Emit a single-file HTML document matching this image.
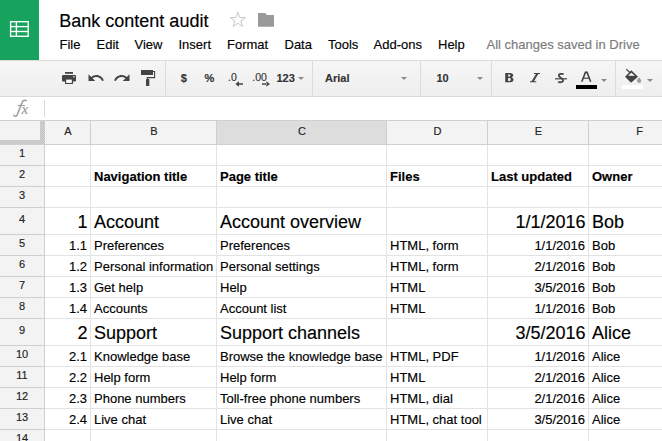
<!DOCTYPE html><html><head><meta charset="utf-8"><style>
*{margin:0;padding:0;box-sizing:border-box}
html,body{width:662px;height:441px;overflow:hidden;background:#fff;font-family:"Liberation Sans", sans-serif;position:relative}
.a{position:absolute;white-space:nowrap}
.t{position:absolute;white-space:nowrap;line-height:1;color:#000;-webkit-text-stroke:0.15px currentColor}
svg{position:absolute;overflow:visible}
</style></head><body>
<div class="a" style="left:0;top:0;width:39px;height:60px;background:#17a35e"></div>
<svg style="left:0;top:0" width="39" height="60" viewBox="0 0 39 60">
<g fill="none" stroke="#fff" stroke-width="1.35">
<rect x="10.6" y="21.7" width="17.6" height="14.6"/>
<line x1="10.6" y1="26.6" x2="28.2" y2="26.6"/>
<line x1="10.6" y1="31.5" x2="28.2" y2="31.5"/>
<line x1="16.4" y1="21.7" x2="16.4" y2="36.3"/>
</g></svg>
<div class="t" style="left:59.3px;top:12px;font-size:18px">Bank content audit</div>
<svg style="left:0;top:0" width="1" height="1"><polygon points="237.90,12.10 239.76,17.44 245.41,17.56 240.91,20.98 242.54,26.39 237.90,23.16 233.26,26.39 234.89,20.98 230.39,17.56 236.04,17.44" fill="none" stroke="#c8c8c8" stroke-width="1"/></svg>
<svg style="left:258px;top:12px" width="17" height="15" viewBox="0 0 17 15">
<path d="M0 1 L7 1 L9 3 L16 3 L16 14.7 L0 14.7 Z" fill="#9a9a9a"/>
</svg>
<div class="t" style="left:59.5px;top:37.6px;font-size:13px">File</div>
<div class="t" style="left:96.5px;top:37.6px;font-size:13px">Edit</div>
<div class="t" style="left:134.5px;top:37.6px;font-size:13px">View</div>
<div class="t" style="left:178.5px;top:37.6px;font-size:13px">Insert</div>
<div class="t" style="left:227.0px;top:37.6px;font-size:13px">Format</div>
<div class="t" style="left:284.5px;top:37.6px;font-size:13px">Data</div>
<div class="t" style="left:328.0px;top:37.6px;font-size:13px">Tools</div>
<div class="t" style="left:373.5px;top:37.6px;font-size:13px">Add-ons</div>
<div class="t" style="left:438.0px;top:37.6px;font-size:13px">Help</div>
<div class="t" style="left:486.5px;top:37.6px;font-size:13px;color:#7b7b7b">All changes saved in Drive</div>
<div class="a" style="left:0;top:60px;width:662px;height:37px;background:linear-gradient(#f6f6f6,#eeeeee);border-top:1px solid #dadada;border-bottom:1px solid #d9d9d9"></div>
<div class="a" style="left:165px;top:61px;width:1px;height:35px;background:#dcdcdc"></div>
<div class="a" style="left:312px;top:61px;width:1px;height:35px;background:#dcdcdc"></div>
<div class="a" style="left:420px;top:61px;width:1px;height:35px;background:#dcdcdc"></div>
<div class="a" style="left:491px;top:61px;width:1px;height:35px;background:#dcdcdc"></div>
<div class="a" style="left:615px;top:61px;width:1px;height:35px;background:#dcdcdc"></div>
<svg style="left:60px;top:70px" width="18" height="16" viewBox="0 0 18 16">
<rect x="5" y="2" width="8" height="1.8" fill="#444"/>
<rect x="2" y="5" width="14" height="6.5" rx="1" fill="#444"/>
<rect x="5" y="8.5" width="8" height="5.5" fill="#444"/>
<rect x="6.2" y="9.6" width="5.6" height="3.3" fill="#fff"/>
<circle cx="13.9" cy="6.8" r="0.8" fill="#fff"/>
</svg>
<svg style="left:86.5px;top:68.5px" width="18" height="18" viewBox="0 0 24 24">
<path d="M12.5 8c-2.65 0-5.05.99-6.9 2.6L2 7v9h9l-3.62-3.62c1.39-1.160 3.16-1.88 5.12-1.88 3.54 0 6.55 2.31 7.6 5.5l2.37-.78C21.08 11.03 17.15 8 12.5 8z" fill="#444"/>
</svg>
<svg style="left:112.5px;top:68.5px" width="18" height="18" viewBox="0 0 24 24">
<path d="M18.4 10.6C16.55 8.99 14.15 8 11.5 8c-4.65 0-8.58 3.03-9.96 7.22L3.9 16c1.05-3.19 4.05-5.5 7.6-5.5 1.95 0 3.73.72 5.12 1.88L13 16h9V7l-3.6 3.6z" fill="#444"/>
</svg>
<svg style="left:140px;top:69px" width="17" height="18" viewBox="0 0 17 18">
<rect x="1" y="1" width="12" height="5" fill="#444"/>
<path d="M13 2.5 H14.6 V8.6 H7.3 V10" fill="none" stroke="#444" stroke-width="1.1"/>
<rect x="6" y="10" width="3.3" height="7" rx="0.5" fill="#444"/>
</svg>
<div class="t" style="left:180.7px;top:73px;font-size:11px;font-weight:bold;color:#333">$</div>
<div class="t" style="left:204.5px;top:73px;font-size:11px;font-weight:bold;color:#333">%</div>
<div class="t" style="left:228px;top:72px;font-size:10.5px;color:#333">.0</div>
<svg style="left:0;top:0" width="1" height="1"><path d="M238 83.2H243V84.8H238Z M235.3 84 L239 81.3 L239 86.7Z" fill="#444"/></svg>
<div class="t" style="left:252.3px;top:72px;font-size:10.5px;color:#333">.00</div>
<svg style="left:0;top:0" width="1" height="1"><path d="M262 83.2H267V84.8H262Z M270 84 L266.3 81.3 L266.3 86.7Z" fill="#444"/></svg>
<div class="t" style="left:276.5px;top:73px;font-size:11px;font-weight:bold;color:#333">123</div>
<svg style="left:297.7px;top:77px" width="6" height="3" viewBox="0 0 6 3"><path d="M0 0H6L3 3Z" fill="#8a8a8a"/></svg>
<div class="t" style="left:325px;top:73px;font-size:11px;font-weight:bold;color:#333">Arial</div>
<svg style="left:400.5px;top:77px" width="6" height="3" viewBox="0 0 6 3"><path d="M0 0H6L3 3Z" fill="#8a8a8a"/></svg>
<div class="t" style="left:436.5px;top:73px;font-size:11px;font-weight:bold;color:#333">10</div>
<svg style="left:477px;top:77px" width="6" height="3" viewBox="0 0 6 3"><path d="M0 0H6L3 3Z" fill="#8a8a8a"/></svg>
<svg style="left:504.8px;top:72.8px" width="9" height="10" viewBox="0 0 9 10">
<path fill-rule="evenodd" fill="#444" d="M0.2 0 H5 C7.3 0 8.2 1.1 8.2 2.3 C8.2 3.4 7.5 4.1 6.5 4.4 C7.8 4.7 8.5 5.6 8.5 6.8 C8.5 8.3 7.3 9.3 5.2 9.3 H0.2 V0 Z M3.1 1.5 H4.3 C5.0 1.5 5.3 1.9 5.3 2.5 C5.3 3.1 5 3.6 4.3 3.6 H3.1 Z M3.1 5.1 H4.5 C5.3 5.1 5.7 5.7 5.7 6.5 C5.7 7.3 5.3 7.9 4.5 7.9 H3.1 Z"/>
</svg>
<svg style="left:529.9px;top:72.8px" width="10" height="10" viewBox="0 0 10 10">
<path fill="#444" d="M4 0 H10 V1.1 H4 Z M0 8.2 H6.3 V9.3 H0 Z M6.3 0.5 H8.6 L3.6 8.8 H1.3 Z"/>
</svg>
<svg style="left:555px;top:72.8px" width="12" height="10" viewBox="0 0 12 10">
<path d="M8.6 1.5 C7.8 0.6 3.8 0.2 3.8 2.6 C3.8 4.6 8.1 4.8 8.1 7.3 C8.1 9.6 4.2 9.6 3.3 8.7" fill="none" stroke="#444" stroke-width="1.8"/>
<rect x="0" y="5.2" width="12" height="1.2" fill="#444"/>
</svg>
<svg style="left:576px;top:70px" width="22" height="20" viewBox="0 0 22 20">
<path d="M5.8 11.8 L9.4 2.4 H11.1 L14.7 11.8" fill="none" stroke="#444" stroke-width="1.6" stroke-linejoin="miter"/>
<rect x="6.8" y="7.6" width="7" height="1.2" fill="#444"/>
<rect x="9" y="1.9" width="2.5" height="1.3" fill="#444"/>
</svg>
<div class="a" style="left:576px;top:85px;width:21px;height:4px;background:#000"></div>
<svg style="left:601px;top:79px" width="6" height="3" viewBox="0 0 6 3"><path d="M0 0H6L3 3Z" fill="#8a8a8a"/></svg>
<svg style="left:618px;top:64px" width="28" height="28" viewBox="0 0 28 28">
<path d="M8.3 5.1 L13.6 10.2" stroke="#444" stroke-width="1.2"/>
<path d="M7 12.7 L13.3 6.3 L20 12.7 L13 18.7 Z" fill="#444"/>
<path d="M10.2 11.75 L13.3 8.7 L16.9 11.75 Z" fill="#fff"/>
<path d="M21.1 13.3 C20 15 19 16 19 16.8 A2.1 2.1 0 0 0 23.2 16.8 C23.2 16 22.2 15 21.1 13.3Z" fill="#9a9a9a"/>
</svg>
<div class="a" style="left:622px;top:85px;width:21px;height:4px;background:#fff"></div>
<svg style="left:647px;top:79px" width="6" height="3" viewBox="0 0 6 3"><path d="M0 0H6L3 3Z" fill="#8a8a8a"/></svg>
<svg style="left:0;top:0" width="1" height="1"><path d="M13.6 114.6 C14.3 116.9 16.2 117.0 17.3 114.6 L21.9 102.8 C22.7 100.6 24.6 99.7 26.8 100.8" fill="none" stroke="#9c9c9c" stroke-width="1.5"/><path d="M17.6 105.5 H24.8" stroke="#9c9c9c" stroke-width="1.1"/></svg>
<div class="t" style="left:21.6px;top:101.8px;font-size:15px;font-style:italic;color:#9a9a9a;font-family:'Liberation Serif',serif">x</div>
<div class="a" style="left:44px;top:100px;width:1px;height:17px;background:#d9d9d9"></div>
<div class="a" style="left:0;top:120px;width:662px;height:25px;background:#f3f3f3"></div>
<div class="a" style="left:217px;top:121px;width:169px;height:23px;background:#dddddd"></div>
<div class="a" style="left:0;top:144px;width:44px;height:300px;background:#f3f3f3"></div>
<div class="a" style="left:0;top:120px;width:662px;height:1px;background:#d0d0d0"></div>
<div class="a" style="left:0;top:144px;width:662px;height:1px;background:#cfcfcf"></div>
<div class="a" style="left:0;top:165px;width:662px;height:1px;background:#e2e3e3"></div>
<div class="a" style="left:0;top:186px;width:662px;height:1px;background:#e2e3e3"></div>
<div class="a" style="left:0;top:207px;width:662px;height:1px;background:#e2e3e3"></div>
<div class="a" style="left:0;top:234px;width:662px;height:1px;background:#e2e3e3"></div>
<div class="a" style="left:0;top:255px;width:662px;height:1px;background:#e2e3e3"></div>
<div class="a" style="left:0;top:276px;width:662px;height:1px;background:#e2e3e3"></div>
<div class="a" style="left:0;top:297px;width:662px;height:1px;background:#e2e3e3"></div>
<div class="a" style="left:0;top:318px;width:662px;height:1px;background:#e2e3e3"></div>
<div class="a" style="left:0;top:345px;width:662px;height:1px;background:#e2e3e3"></div>
<div class="a" style="left:0;top:366px;width:662px;height:1px;background:#e2e3e3"></div>
<div class="a" style="left:0;top:387px;width:662px;height:1px;background:#e2e3e3"></div>
<div class="a" style="left:0;top:408px;width:662px;height:1px;background:#e2e3e3"></div>
<div class="a" style="left:0;top:429px;width:662px;height:1px;background:#e2e3e3"></div>
<div class="a" style="left:0;top:450px;width:662px;height:1px;background:#e2e3e3"></div>
<div class="a" style="left:44px;top:120px;width:1px;height:330px;background:#cfcfcf"></div>
<div class="a" style="left:90px;top:120px;width:1px;height:330px;background:#e2e3e3"></div>
<div class="a" style="left:216px;top:120px;width:1px;height:330px;background:#e2e3e3"></div>
<div class="a" style="left:386px;top:120px;width:1px;height:330px;background:#e2e3e3"></div>
<div class="a" style="left:487px;top:120px;width:1px;height:330px;background:#e2e3e3"></div>
<div class="a" style="left:588px;top:120px;width:1px;height:330px;background:#e2e3e3"></div>
<div class="a" style="left:689px;top:120px;width:1px;height:330px;background:#e2e3e3"></div>
<div class="a" style="left:90px;top:120px;width:1px;height:25px;background:#cfcfcf"></div>
<div class="a" style="left:216px;top:120px;width:1px;height:25px;background:#cfcfcf"></div>
<div class="a" style="left:386px;top:120px;width:1px;height:25px;background:#cfcfcf"></div>
<div class="a" style="left:487px;top:120px;width:1px;height:25px;background:#cfcfcf"></div>
<div class="a" style="left:588px;top:120px;width:1px;height:25px;background:#cfcfcf"></div>
<div class="a" style="left:689px;top:120px;width:1px;height:25px;background:#cfcfcf"></div>
<div class="a" style="left:0;top:165px;width:45px;height:1px;background:#cfcfcf"></div>
<div class="a" style="left:0;top:186px;width:45px;height:1px;background:#cfcfcf"></div>
<div class="a" style="left:0;top:207px;width:45px;height:1px;background:#cfcfcf"></div>
<div class="a" style="left:0;top:234px;width:45px;height:1px;background:#cfcfcf"></div>
<div class="a" style="left:0;top:255px;width:45px;height:1px;background:#cfcfcf"></div>
<div class="a" style="left:0;top:276px;width:45px;height:1px;background:#cfcfcf"></div>
<div class="a" style="left:0;top:297px;width:45px;height:1px;background:#cfcfcf"></div>
<div class="a" style="left:0;top:318px;width:45px;height:1px;background:#cfcfcf"></div>
<div class="a" style="left:0;top:345px;width:45px;height:1px;background:#cfcfcf"></div>
<div class="a" style="left:0;top:366px;width:45px;height:1px;background:#cfcfcf"></div>
<div class="a" style="left:0;top:387px;width:45px;height:1px;background:#cfcfcf"></div>
<div class="a" style="left:0;top:408px;width:45px;height:1px;background:#cfcfcf"></div>
<div class="a" style="left:0;top:429px;width:45px;height:1px;background:#cfcfcf"></div>
<div class="a" style="left:0;top:450px;width:45px;height:1px;background:#cfcfcf"></div>
<div class="a" style="left:40px;top:121px;width:5px;height:23px;background:repeating-conic-gradient(#c3c3c3 0 25%,#d3d3d3 0 50%) 0 0/2px 2px"></div>
<div class="a" style="left:0;top:140px;width:45px;height:4px;background:repeating-conic-gradient(#c3c3c3 0 25%,#d3d3d3 0 50%) 0 0/2px 2px"></div>
<div class="t" style="left:45.5px;width:45px;top:126px;text-align:center;font-size:11px;color:#222">A</div>
<div class="t" style="left:91.5px;width:125px;top:126px;text-align:center;font-size:11px;color:#222">B</div>
<div class="t" style="left:217.5px;width:169px;top:126px;text-align:center;font-size:11px;color:#222">C</div>
<div class="t" style="left:387.5px;width:100px;top:126px;text-align:center;font-size:11px;color:#222">D</div>
<div class="t" style="left:488.5px;width:100px;top:126px;text-align:center;font-size:11px;color:#222">E</div>
<div class="t" style="left:589.5px;width:100px;top:126px;text-align:center;font-size:11px;color:#222">F</div>
<div class="t" style="left:0;width:44px;top:147.5px;text-align:center;font-size:11px;color:#222">1</div>
<div class="t" style="left:0;width:44px;top:168.5px;text-align:center;font-size:11px;color:#222">2</div>
<div class="t" style="left:0;width:44px;top:189.5px;text-align:center;font-size:11px;color:#222">3</div>
<div class="t" style="left:0;width:44px;top:213.5px;text-align:center;font-size:11px;color:#222">4</div>
<div class="t" style="left:0;width:44px;top:237.5px;text-align:center;font-size:11px;color:#222">5</div>
<div class="t" style="left:0;width:44px;top:258.5px;text-align:center;font-size:11px;color:#222">6</div>
<div class="t" style="left:0;width:44px;top:279.5px;text-align:center;font-size:11px;color:#222">7</div>
<div class="t" style="left:0;width:44px;top:300.5px;text-align:center;font-size:11px;color:#222">8</div>
<div class="t" style="left:0;width:44px;top:324.5px;text-align:center;font-size:11px;color:#222">9</div>
<div class="t" style="left:0;width:44px;top:348.5px;text-align:center;font-size:11px;color:#222">10</div>
<div class="t" style="left:0;width:44px;top:369.5px;text-align:center;font-size:11px;color:#222">11</div>
<div class="t" style="left:0;width:44px;top:390.5px;text-align:center;font-size:11px;color:#222">12</div>
<div class="t" style="left:0;width:44px;top:411.5px;text-align:center;font-size:11px;color:#222">13</div>
<div class="t" style="left:0;width:44px;top:432.5px;text-align:center;font-size:11px;color:#222">14</div>
<div class="t" style="top:169.74px;font-size:13px;font-weight:bold;left:94px;">Navigation title</div>
<div class="t" style="top:169.74px;font-size:13px;font-weight:bold;left:220px;">Page title</div>
<div class="t" style="top:169.74px;font-size:13px;font-weight:bold;left:390px;">Files</div>
<div class="t" style="top:169.74px;font-size:13px;font-weight:bold;left:491px;">Last updated</div>
<div class="t" style="top:169.74px;font-size:13px;font-weight:bold;left:592px;">Owner</div>
<div class="t" style="top:212.91px;font-size:18px;left:45px;width:42.5px;text-align:right;">1</div>
<div class="t" style="top:212.91px;font-size:18px;left:94px;">Account</div>
<div class="t" style="top:212.91px;font-size:18px;left:220px;">Account overview</div>
<div class="t" style="top:212.91px;font-size:18px;left:488px;width:97.5px;text-align:right;">1/1/2016</div>
<div class="t" style="top:212.91px;font-size:18px;left:592px;">Bob</div>
<div class="t" style="top:238.74px;font-size:13px;left:45px;width:42px;text-align:right;">1.1</div>
<div class="t" style="top:238.74px;font-size:13px;left:94px;">Preferences</div>
<div class="t" style="top:238.74px;font-size:13px;left:220px;">Preferences</div>
<div class="t" style="top:238.74px;font-size:13px;left:390px;">HTML, form</div>
<div class="t" style="top:238.74px;font-size:13px;left:488px;width:97px;text-align:right;">1/1/2016</div>
<div class="t" style="top:238.74px;font-size:13px;left:592px;">Bob</div>
<div class="t" style="top:259.74px;font-size:13px;left:45px;width:42px;text-align:right;">1.2</div>
<div class="t" style="top:259.74px;font-size:13px;left:94px;">Personal information</div>
<div class="t" style="top:259.74px;font-size:13px;left:220px;">Personal settings</div>
<div class="t" style="top:259.74px;font-size:13px;left:390px;">HTML, form</div>
<div class="t" style="top:259.74px;font-size:13px;left:488px;width:97px;text-align:right;">2/1/2016</div>
<div class="t" style="top:259.74px;font-size:13px;left:592px;">Bob</div>
<div class="t" style="top:280.74px;font-size:13px;left:45px;width:42px;text-align:right;">1.3</div>
<div class="t" style="top:280.74px;font-size:13px;left:94px;">Get help</div>
<div class="t" style="top:280.74px;font-size:13px;left:220px;">Help</div>
<div class="t" style="top:280.74px;font-size:13px;left:390px;">HTML</div>
<div class="t" style="top:280.74px;font-size:13px;left:488px;width:97px;text-align:right;">3/5/2016</div>
<div class="t" style="top:280.74px;font-size:13px;left:592px;">Bob</div>
<div class="t" style="top:301.74px;font-size:13px;left:45px;width:42px;text-align:right;">1.4</div>
<div class="t" style="top:301.74px;font-size:13px;left:94px;">Accounts</div>
<div class="t" style="top:301.74px;font-size:13px;left:220px;">Account list</div>
<div class="t" style="top:301.74px;font-size:13px;left:390px;">HTML</div>
<div class="t" style="top:301.74px;font-size:13px;left:488px;width:97px;text-align:right;">1/1/2016</div>
<div class="t" style="top:301.74px;font-size:13px;left:592px;">Bob</div>
<div class="t" style="top:323.91px;font-size:18px;left:45px;width:42.5px;text-align:right;">2</div>
<div class="t" style="top:323.91px;font-size:18px;left:94px;">Support</div>
<div class="t" style="top:323.91px;font-size:18px;left:220px;">Support channels</div>
<div class="t" style="top:323.91px;font-size:18px;left:488px;width:97.5px;text-align:right;">3/5/2016</div>
<div class="t" style="top:323.91px;font-size:18px;left:592px;">Alice</div>
<div class="t" style="top:349.74px;font-size:13px;left:45px;width:42px;text-align:right;">2.1</div>
<div class="t" style="top:349.74px;font-size:13px;left:94px;">Knowledge base</div>
<div class="t" style="top:349.74px;font-size:13px;left:220px;">Browse the knowledge base</div>
<div class="t" style="top:349.74px;font-size:13px;left:390px;">HTML, PDF</div>
<div class="t" style="top:349.74px;font-size:13px;left:488px;width:97px;text-align:right;">1/1/2016</div>
<div class="t" style="top:349.74px;font-size:13px;left:592px;">Alice</div>
<div class="t" style="top:370.74px;font-size:13px;left:45px;width:42px;text-align:right;">2.2</div>
<div class="t" style="top:370.74px;font-size:13px;left:94px;">Help form</div>
<div class="t" style="top:370.74px;font-size:13px;left:220px;">Help form</div>
<div class="t" style="top:370.74px;font-size:13px;left:390px;">HTML</div>
<div class="t" style="top:370.74px;font-size:13px;left:488px;width:97px;text-align:right;">2/1/2016</div>
<div class="t" style="top:370.74px;font-size:13px;left:592px;">Alice</div>
<div class="t" style="top:391.74px;font-size:13px;left:45px;width:42px;text-align:right;">2.3</div>
<div class="t" style="top:391.74px;font-size:13px;left:94px;">Phone numbers</div>
<div class="t" style="top:391.74px;font-size:13px;left:220px;">Toll-free phone numbers</div>
<div class="t" style="top:391.74px;font-size:13px;left:390px;">HTML, dial</div>
<div class="t" style="top:391.74px;font-size:13px;left:488px;width:97px;text-align:right;">2/1/2016</div>
<div class="t" style="top:391.74px;font-size:13px;left:592px;">Alice</div>
<div class="t" style="top:412.74px;font-size:13px;left:45px;width:42px;text-align:right;">2.4</div>
<div class="t" style="top:412.74px;font-size:13px;left:94px;">Live chat</div>
<div class="t" style="top:412.74px;font-size:13px;left:220px;">Live chat</div>
<div class="t" style="top:412.74px;font-size:13px;left:390px;">HTML, chat tool</div>
<div class="t" style="top:412.74px;font-size:13px;left:488px;width:97px;text-align:right;">3/5/2016</div>
<div class="t" style="top:412.74px;font-size:13px;left:592px;">Alice</div>
</body></html>
